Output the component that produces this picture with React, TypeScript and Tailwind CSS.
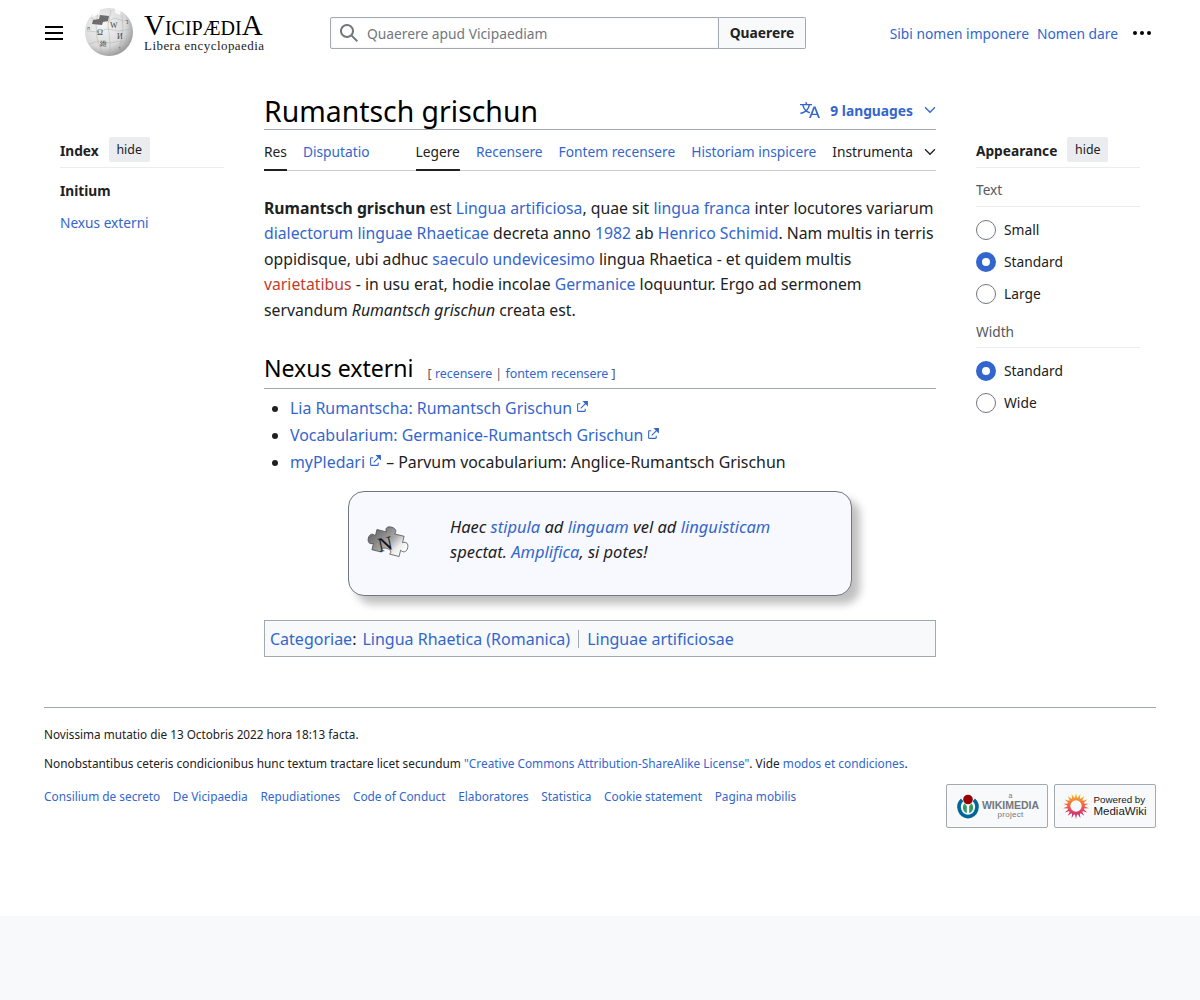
import React from "react";

const A = ({ children, className = "" }: { children: React.ReactNode; className?: string }) => (
  <a className={"text-[#3366cc] " + className}>{children}</a>
);

const Ext = () => (
  <svg viewBox="0 0 12 12" className="inline-block w-[13px] h-[13px] ml-[4px] align-[1px]" fill="#3366cc">
    <path d="M6 1h5v5L8.86 3.85 4.7 8 4 7.3l4.15-4.16zM2 3h2v1H2v6h6V8h1v2a1 1 0 0 1-1 1H2a1 1 0 0 1-1-1V4a1 1 0 0 1 1-1" />
  </svg>
);

const Chevron = ({ color = "#202122" }: { color?: string }) => (
  <svg viewBox="0 0 20 20" className="w-3 h-3" fill={color}>
    <path d="m17.5 4.75-7.5 7.5-7.5-7.5L1 6.25l9 9 9-9z" />
  </svg>
);

const Radio = ({ on, label }: { on?: boolean; label: string }) => (
  <div className="flex items-center h-[32px] text-[13.8px] text-[#202122]">
    {on ? (
      <span className="w-5 h-5 rounded-full border-[6px] border-[#3366cc] bg-white box-border" />
    ) : (
      <span className="w-5 h-5 rounded-full border border-[#72777d] bg-white box-border" />
    )}
    <span className="ml-2">{label}</span>
  </div>
);

const Globe = () => (
  <svg viewBox="0 0 50 50" className="w-[50px] h-[50px] shrink-0">
    <defs>
      <radialGradient id="g" cx="38%" cy="35%" r="72%">
        <stop offset="0%" stopColor="#f6f6f6" />
        <stop offset="65%" stopColor="#d9d9d9" />
        <stop offset="100%" stopColor="#8f8f8f" />
      </radialGradient>
    </defs>
    <circle cx="25" cy="25" r="24" fill="url(#g)" />
    <path d="M7 11l6 3 7-2 4 3 6-4 10 3M3 24l10 1 10-3 12 2 13-2M5 37l10-3 11 2 11-2 8 3M14 5l-2 12 1 14 5 15M27 3l-3 15 2 16 0 14M38 8l1 14-2 12-3 11" stroke="#b0b0b0" strokeWidth=".5" fill="none" />
    <path d="M8 17l1-4 6-1 1-4 9 1-1 5-5 1-1 3z" fill="#6d6d6d" />
    <path d="M11 3l6-2-2 6-7 3z" fill="#fff" />
    <path d="M31 1l6 2-1 5-5-2z" fill="#fff" opacity=".8" />
    <g fontFamily="'Liberation Serif', serif" fill="#444">
      <text x="13" y="28" fontSize="8">Ω</text>
      <text x="26" y="21" fontSize="8">W</text>
      <text x="33" y="32" fontSize="8">И</text>
      <text x="16" y="39" fontSize="7">維</text>
      <text x="3" y="23" fontSize="5">ก</text>
      <text x="41" y="17" fontSize="6">ว</text>
      <text x="35" y="43" fontSize="6">ו</text>
    </g>
  </svg>
);

const Puzzle = () => (
  <svg viewBox="0 0 44 32" className="w-[44px] h-[32px] overflow-visible">
    <defs>
      <linearGradient id="p" x1="0" y1="0.3" x2="1" y2="0.7">
        <stop offset="0%" stopColor="#5f5f5f" />
        <stop offset="55%" stopColor="#a8a8a8" />
        <stop offset="78%" stopColor="#ececec" />
        <stop offset="100%" stopColor="#fff" />
      </linearGradient>
    </defs>
    <g transform="translate(22 16) rotate(14) scale(1.4 1.3)">
      <path
        d="M-10-8L-3-8C-7-14 6-14 3-8L10-8L10-3C16-7 16 7 10 3L10 8L3 8C6 3-6 3-3 8L-10 8L-10 3C-16 7-16-7-10-3Z"
        fill="url(#p)"
        stroke="#444"
        strokeWidth=".5"
      />
    </g>
    <text x="12" y="24" fontSize="20" fontFamily="'Liberation Serif', serif" fill="#111" transform="rotate(-12 18 18)">N</text>
  </svg>
);

const Petals = () => {
  const items = Array.from({ length: 18 }, (_, i) => i);
  return (
    <svg viewBox="0 0 26 26" className="w-[26px] h-[26px] shrink-0">
      <defs>
        <linearGradient id="mw" gradientUnits="userSpaceOnUse" x1="13" y1="0" x2="13" y2="26">
          <stop offset="0%" stopColor="#f9c51f" />
          <stop offset="40%" stopColor="#f2703a" />
          <stop offset="75%" stopColor="#d93c6a" />
          <stop offset="100%" stopColor="#a53c90" />
        </linearGradient>
      </defs>
      <g fill="url(#mw)">
        <path d={items.map((i) => {
          const t = (i * 20 * Math.PI) / 180;
          const s = 0.2;
          const x = (r: number, a: number) => (13 + r * Math.sin(a)).toFixed(2);
          const y = (r: number, a: number) => (13 - r * Math.cos(a)).toFixed(2);
          return `M${x(7, t - s)} ${y(7, t - s)}L${x(13, t)} ${y(13, t)}L${x(7, t + s)} ${y(7, t + s)}Z`;
        }).join("")} />
      </g>
      <circle cx="13" cy="13" r="7.2" fill="none" stroke="url(#mw)" strokeWidth="3" />
    </svg>
  );
};

const WikimediaLogo = () => (
  <svg viewBox="0 0 26 26" className="w-[26px] h-[26px] shrink-0">
    <circle cx="13" cy="6.5" r="4.8" fill="#990000" />
    <path d="M6 5.5A11.5 11.5 0 0 0 13 25.5a11.5 11.5 0 0 0 7-20l-2.4 2.8A7.8 7.8 0 0 1 13 21.8 7.8 7.8 0 0 1 8.4 8.3z" fill="#006699" />
    <path d="M9.5 10.5A6 6 0 0 0 11.8 20.2V13zM16.5 10.5A6 6 0 0 1 14.2 20.2V13z" fill="#339966" />
  </svg>
);

export default function App() {
  return (
    <div className="min-h-[1000px] bg-[#f8f9fa] text-[#202122] font-['Noto_Sans',sans-serif]">
      <div className="h-[916px] bg-white flex flex-col">
        {/* header */}
        <header className="h-[66px] shrink-0 flex items-center pl-[44px] pr-[44px]">
          <svg viewBox="0 0 20 20" className="w-5 h-5 shrink-0" fill="#000">
            <path d="M1 3v2h18V3zm0 6v2h18V9zm0 6v2h18v-2z" />
          </svg>
          <div className="ml-[20px] flex items-center w-[246px] shrink-0 -mt-[2px]">
            <Globe />
            <div className="ml-[10px] font-['Liberation_Serif',serif] text-black whitespace-nowrap">
              <div className="text-[29px] leading-[24px] [font-variant:small-caps] mt-[2px]">Vicipædi<span className="text-[29px] [font-variant:normal]">A</span></div>
              <div className="text-[13px] leading-[15px] mt-[1px] tracking-[0.45px] text-[#222]">Libera encyclopaedia</div>
            </div>
          </div>
          <form className="flex w-[476px] h-[32px] shrink-0">
            <div className="flex-1 flex items-center border border-[#a2a9b1] rounded-l-[2px] pl-[8px] shadow-[inset_0_0_2px_rgba(0,0,0,0.1)]">
              <svg viewBox="0 0 20 20" className="w-5 h-5 shrink-0" fill="#72777d">
                <path d="M12.2 13.6a7 7 0 1 1 1.4-1.4l5.4 5.4-1.4 1.4zM3 8a5 5 0 1 0 10 0A5 5 0 0 0 3 8" />
              </svg>
              <span className="ml-[8px] text-[13.8px] text-[#72777d] pt-[2px]">Quaerere apud Vicipaediam</span>
            </div>
            <button type="button" className="w-[87px] border border-l-0 border-[#a2a9b1] rounded-r-[2px] bg-[#f8f9fa] text-[13.8px] font-bold text-[#202122]">
              Quaerere
            </button>
          </form>
          <div className="ml-auto mr-[4px] flex items-center text-[13.8px]">
            <A className="pt-[2px]">Sibi nomen imponere</A>
            <A className="ml-[8px] pt-[2px]">Nomen dare</A>
            <svg viewBox="0 0 20 20" className="w-5 h-5 ml-[14px]" fill="#000">
              <circle cx="3" cy="10" r="2" />
              <circle cx="10" cy="10" r="2" />
              <circle cx="17" cy="10" r="2" />
            </svg>
          </div>
        </header>

        {/* body */}
        <div className="flex pl-[60px] pr-[60px] mt-[25px]">
          <aside className="w-[164px] shrink-0 pt-[46px] text-[13.7px]">
            <div className="flex items-center h-[26px] pb-[4px] border-b border-[#eaecf0] box-content">
              <span className="font-bold pt-[2px]">Index</span>
              <span className="ml-[10px] bg-[#eaecf0] h-[25px] w-[41px] -mt-px justify-center flex items-center text-[12.4px] rounded-[2px] pt-[2px]">hide</span>
            </div>
            <div className="mt-[6px] font-bold h-[32px] flex items-center pt-[2px]">Initium</div>
            <div className="h-[32px] flex items-center pt-[2px]"><A>Nexus externi</A></div>
          </aside>

          <main className="w-[672px] shrink-0 ml-[40px]">
            <div className="flex items-end justify-between h-[39px] border-b border-[#a2a9b1]">
              <h1 className="text-[28.4px] leading-[38px] text-black translate-y-px">Rumantsch grischun</h1>
              <div className="flex items-center h-[38px] text-[13.8px] font-bold text-[#3366cc]">
                <svg viewBox="0 0 20 20" className="w-5 h-5" fill="#3366cc">
                  <path d="M20 18h-1.44a.6.6 0 0 1-.4-.12.8.8 0 0 1-.23-.31L17 15h-5l-1 2.54a.8.8 0 0 1-.22.3.6.6 0 0 1-.4.14H9l4.55-11.47h1.89zm-3.53-4.31L14.89 9.5a12 12 0 0 1-.39-1.24q-.09.37-.19.69l-.19.56-1.58 4.19zm-6.3-1.58a13.4 13.4 0 0 1-2.91-1.41 11.46 11.46 0 0 0 2.81-5.37H12V4H7.31a4 4 0 0 0-.2-.56C6.87 2.79 6.6 2 6.6 2l-1.47.5s.4.89.6 1.5H0v1.33h2.15A11.23 11.23 0 0 0 5 10.7a17.2 17.2 0 0 1-5 2.1q.56.82.87 1.38a23.3 23.3 0 0 0 5.22-2.51 15.6 15.6 0 0 0 3.56 1.77zM3.63 5.33h4.91a8.1 8.1 0 0 1-2.45 4.45 9.1 9.1 0 0 1-2.46-4.45" />
                </svg>
                <span className="ml-[10px] pt-[2px]">9 languages</span>
                <span className="ml-[11px]"><Chevron color="#3366cc" /></span>
              </div>
            </div>

            <div className="flex h-[41px] border-b border-[#c8ccd1] text-[13.75px] items-stretch">
              <span className="flex items-center border-b-2 border-[#202122] -mb-px pt-[5px]">Res</span>
              <A className="flex items-center ml-[16px] pt-[4px]">Disputatio</A>
              <span className="flex items-center ml-[46px] border-b-2 border-[#202122] -mb-px pt-[5px]">Legere</span>
              <A className="flex items-center ml-[16px] pt-[4px]">Recensere</A>
              <A className="flex items-center ml-[16px] pt-[4px]">Fontem recensere</A>
              <A className="flex items-center ml-[16px] pt-[4px]">Historiam inspicere</A>
              <span className="flex items-center ml-[16px] pt-[4px]">Instrumenta</span>
              <span className="flex items-center ml-auto pt-[4px]"><Chevron /></span>
            </div>

            <p className="mt-[24.7px] text-[15.78px] leading-[25.6px] whitespace-nowrap">
              <b>Rumantsch grischun</b> est <A>Lingua artificiosa</A>, quae sit <A>lingua franca</A> inter locutores variarum
              <br />
              <A>dialectorum linguae Rhaeticae</A> decreta anno <A>1982</A> ab <A>Henrico Schimid</A>. Nam multis in terris
              <br />
              oppidisque, ubi adhuc <A>saeculo undevicesimo</A> lingua Rhaetica - et quidem multis
              <br />
              <a className="text-[#bf3c2c]">varietatibus</a> - in usu erat, hodie incolae <A>Germanice</A> loquuntur. Ergo ad sermonem
              <br />
              servandum <i>Rumantsch grischun</i> creata est.
            </p>

            <div className="mt-[23.3px] h-[42px] flex items-end border-b border-[#a2a9b1] pb-[2px]">
              <h2 className="text-[23.1px] leading-[36px] text-black">Nexus externi</h2>
              <span className="ml-[14px] text-[12.4px] leading-[20px] mb-[2px] text-[#54595d]">
                [ <A>recensere</A> | <A>fontem recensere</A> ]
              </span>
            </div>

            <ul className="mt-[6px] ml-[26px] list-disc text-[15.9px] leading-[27px]">
              <li><A>Lia Rumantscha: Rumantsch Grischun</A><Ext /></li>
              <li><A>Vocabularium: Germanice-Rumantsch Grischun</A><Ext /></li>
              <li><A>myPledari</A><Ext /> – Parvum vocabularium: Anglice-Rumantsch Grischun</li>
            </ul>

            <div className="mt-[15px] mx-auto w-[504px] h-[105px] rounded-[16px] border border-[#72777d] bg-[#f8f9ff] shadow-[8px_8px_8px_rgba(0,0,0,0.25)] flex items-center">
              <div className="ml-[17px] w-[44px] shrink-0"><Puzzle /></div>
              <div className="ml-[40px] w-[340px] text-[16.5px] leading-[25.6px] italic -mt-[8px]">
                Haec <A>stipula</A> ad <A>linguam</A> vel ad <A>linguisticam</A>
                <br />
                spectat. <A>Amplifica</A>, si potes!
              </div>
            </div>

            <div className="mt-[24px] h-[37px] border border-[#a2a9b1] bg-[#f8f9fa] flex items-center px-[5px] text-[16px] pt-px">
              <A>Categoriae</A><span>:</span>
              <A className="ml-[6px]">Lingua Rhaetica (Romanica)</A>
              <span className="mx-[8px] w-px h-[18px] bg-[#a2a9b1]" />
              <A>Linguae artificiosae</A>
            </div>
          </main>

          <aside className="w-[164px] shrink-0 ml-[40px] pt-[46px] text-[13.7px]">
            <div className="flex items-center h-[26px] pb-[4px] border-b border-[#eaecf0] box-content">
              <span className="font-bold pt-[2px]">Appearance</span>
              <span className="ml-[10px] bg-[#eaecf0] h-[25px] w-[41px] -mt-px justify-center flex items-center text-[12.4px] rounded-[2px] pt-[2px]">hide</span>
            </div>
            <div className="mt-[8px] h-[31px] box-border pb-[1px] flex items-center text-[#54595d] border-b border-[#eaecf0]">Text</div>
            <div className="mt-[7px]">
              <Radio label="Small" />
              <Radio on label="Standard" />
              <Radio label="Large" />
            </div>
            <div className="mt-[7px] h-[30px] flex items-center text-[#54595d] border-b border-[#eaecf0] box-content">Width</div>
            <div className="mt-[7px]">
              <Radio on label="Standard" />
              <Radio label="Wide" />
            </div>
          </aside>
        </div>

        {/* footer */}
        <footer className="mt-[50px] mx-[44px] border-t border-[#a2a9b1] pt-[16px] text-[11.85px] text-[#202122]">
          <div className="leading-[20px] text-[11.75px]">Novissima mutatio die 13 Octobris 2022 hora 18:13 facta.</div>
          <div className="mt-[9px] leading-[20px]">
            Nonobstantibus ceteris condicionibus hunc textum tractare licet secundum <A>"Creative Commons Attribution-ShareAlike License"</A>. Vide <A>modos et condiciones</A>.
          </div>
          <div className="mt-[11px] flex items-start justify-between">
            <div className="flex gap-[12.7px] leading-[20px] mt-[2px]">
              <A>Consilium de secreto</A>
              <A>De Vicipaedia</A>
              <A>Repudiationes</A>
              <A>Code of Conduct</A>
              <A>Elaboratores</A>
              <A>Statistica</A>
              <A>Cookie statement</A>
              <A>Pagina mobilis</A>
            </div>
            <div className="flex gap-[6px]">
              <div className="w-[102px] h-[44px] border border-[#a2a9b1] rounded-[2px] bg-[#f8f9fa] flex items-center justify-center">
                <WikimediaLogo />
                <div className="ml-[1px] flex flex-col items-center text-[#72777d] font-['Liberation_Sans',sans-serif] leading-none">
                  <span className="text-[7px] leading-[8px]">a</span>
                  <span className="text-[10.5px] leading-[10px] font-bold">WIKIMEDIA</span>
                  <span className="text-[8px] leading-[9px] tracking-[0.3px]">project</span>
                </div>
              </div>
              <div className="w-[102px] h-[44px] border border-[#a2a9b1] rounded-[2px] bg-[#f8f9fa] flex items-center justify-center">
                <Petals />
                <div className="ml-[4px] flex flex-col text-[#202122] font-['Liberation_Sans',sans-serif]">
                  <span className="text-[9.8px] leading-[11px]">Powered by</span>
                  <span className="text-[11.5px] leading-[12px]">MediaWiki</span>
                </div>
              </div>
            </div>
          </div>
        </footer>
      </div>
    </div>
  );
}
